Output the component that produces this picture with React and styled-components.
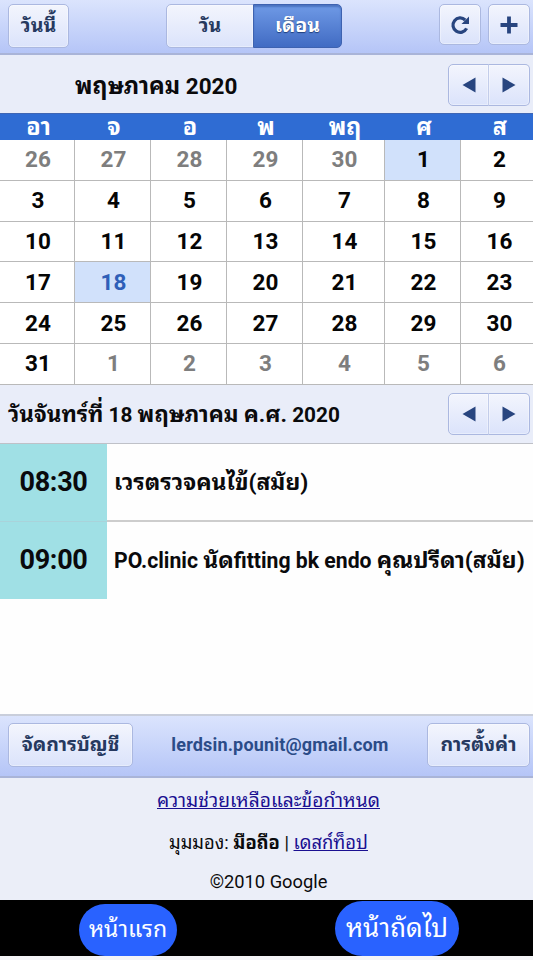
import React, { useState } from "react";
import styled, { createGlobalStyle } from "styled-components";

const GlobalStyle = createGlobalStyle`
  * {
    box-sizing: border-box;
  }
  body {
    margin: 0;
    background: #f4f5f7;
    font-family: Roboto, "Noto Sans Thai Looped", "Noto Sans", sans-serif;
    line-height: 1.2;
    color: #0a0a0c;
  }
  button {
    font-family: inherit;
    line-height: inherit;
    padding: 0;
    cursor: pointer;
  }
`;

const Page = styled.div`
  width: 533px;
  height: 960px;
  overflow: hidden;
  display: flex;
  flex-direction: column;
`;

// Thai glyphs run smaller than Roboto at the same size
const Thai = styled.span`
  font-size: ${(props) => props.$scale || 1.08}em;
  line-height: 1;
`;

const Toolbar = styled.div`
  display: flex;
  justify-content: space-between;
  align-items: flex-start;
  height: ${(props) => props.$height}px;
  padding: ${(props) => props.$pad};
  background: linear-gradient(#dbe4fd, #b5c5f7);
  border-top: ${(props) => (props.$topLine ? "2px solid #c9cedb" : "none")};
  border-bottom: 2px solid #a9b4d8;
`;

const Group = styled.div`
  display: flex;
  gap: ${(props) => props.$gap || 0}px;
`;

const Button = styled.button`
  display: flex;
  align-items: center;
  justify-content: center;
  width: ${(props) => props.$width}px;
  height: ${(props) => props.$height || 44}px;
  border: 1px solid #abb8e0;
  border-radius: ${(props) => props.$radius || "5px"};
  background: linear-gradient(#f3f5fd, #dbe3fb);
  box-shadow: inset 0 0 0 1px rgba(255, 255, 255, 0.35);
  color: #26395f;
  font-size: 19.5px;
  font-weight: 700;
  white-space: nowrap;
  ${(props) =>
    props.$joined &&
    `
      border-left-color: #c3cdea;
      margin-left: -1px;
    `}
  ${(props) =>
    props.$active &&
    `
      background: linear-gradient(#6f9ae6, #416bc3);
      border-color: #3e62b0;
      box-shadow: inset 0 2px 2px #4a72c0;
      color: #fff;
      text-shadow: 0 1px 1px #1f3f7d;
    `}
`;

const Account = styled.div`
  color: #2b4c88;
  font-size: 18px;
  font-weight: 700;
  line-height: 43px;
  letter-spacing: 0.17px;
`;

const Heading = styled.div`
  display: flex;
  align-items: center;
  justify-content: space-between;
  height: ${(props) => props.$height}px;
  padding: ${(props) => props.$pad};
  background: #e9edf9;
  border-bottom: ${(props) => (props.$line ? "1px solid #bfc1c8" : "none")};
`;

const Title = styled.div`
  padding-top: 2px;
  font-size: ${(props) => props.$size}px;
  font-weight: 700;
  white-space: nowrap;
`;

const Week = styled.div`
  display: grid;
  grid-template-columns: 75px 76px 76px 76px 82px 76px 76px;
`;

const WeekHead = styled(Week)`
  height: 27px;
  background: #2f6cd3;
  border-top: 1px solid #3f66b4;
`;

const WeekDay = styled.div`
  padding-left: 2px;
  color: #fff;
  font-size: 23.5px;
  font-weight: 700;
  line-height: 26px;
  text-align: center;
`;

const Month = styled(Week)`
  grid-auto-rows: 40.8px;
  height: 245px;
  background: #fff;
`;

const Day = styled.div`
  display: flex;
  align-items: center;
  justify-content: center;
  padding-left: 2px;
  border-right: 1px solid #b9b9b9;
  border-bottom: 1px solid #b9b9b9;
  background: ${(props) => (props.$marked ? "#d1e1fb" : "#fff")};
  color: ${(props) =>
    props.$today ? "#2f5fb8" : props.$muted ? "#7e7e7e" : "#050505"};
  font-size: 22.5px;
  font-weight: 700;
`;

const Events = styled.div`
  height: 270px;
  background: #fefefe;
`;

const Event = styled.div`
  display: flex;
  align-items: center;
  height: ${(props) => props.$height}px;
`;

const Time = styled.div`
  display: flex;
  align-items: center;
  justify-content: center;
  width: 107px;
  height: 100%;
  background: #a0e0e5;
  border-bottom: ${(props) => (props.$line ? "1px solid #a9d3da" : "none")};
  font-size: 27px;
  font-weight: 700;
  letter-spacing: -0.3px;
`;

const EventName = styled.div`
  flex: 1;
  height: 100%;
  padding-left: 7px;
  border-bottom: ${(props) => (props.$line ? "2px solid #cdcdcd" : "none")};
  font-size: 21.2px;
  font-weight: 700;
  line-height: 78px;
  white-space: nowrap;
`;

const Footer = styled.div`
  display: flex;
  flex-direction: column;
  align-items: center;
  height: 122px;
  padding-top: 7px;
  background: #ebeef8;
  font-size: 18px;
`;

const FooterLine = styled.div`
  height: ${(props) => props.$height}px;
  line-height: 32px;
  padding-left: 4px;
  font-size: ${(props) => props.$size || 18}px;
  white-space: nowrap;
`;

const Link = styled.a`
  color: #1a0f91;
  text-decoration: underline;
  text-decoration-skip-ink: none;
`;

const BottomNav = styled.div`
  display: flex;
  align-items: flex-end;
  height: 56px;
  padding-left: 79px;
  gap: 158px;
  background: #000;
`;

const Pill = styled.button`
  display: flex;
  align-items: center;
  justify-content: center;
  width: ${(props) => props.$width}px;
  height: ${(props) => props.$height}px;
  border: 0;
  border-radius: 28px;
  background: #2962ff;
  color: #fff;
  font-size: ${(props) => props.$size}px;
  white-space: nowrap;
`;

const Arrow = ({ left }) => (
  <svg width="14" height="16" viewBox="0 0 14 16">
    <path d={left ? "M13.5 0.5V15.5L0.5 8Z" : "M0.5 0.5V15.5L13.5 8Z"} fill="#28457f" />
  </svg>
);

const Pager = ({ onPrev, onNext }) => (
  <Group>
    <Button $width={41} $height={42} $radius="5px 0 0 5px" onClick={onPrev}>
      <Arrow left />
    </Button>
    <Button $width={42} $height={42} $radius="0 5px 5px 0" $joined onClick={onNext}>
      <Arrow />
    </Button>
  </Group>
);

const weekDays = ["อา", "จ", "อ", "พ", "พฤ", "ศ", "ส"];

// five trailing days of April, May, then six days of June
const days = Array.from({ length: 42 }, (_, i) => {
  if (i < 5) return { n: 26 + i, muted: true };
  if (i > 35) return { n: i - 35, muted: true };
  return { n: i - 4, muted: false };
});

const App = () => {
  const [view, setView] = useState("month");
  return (
    <Page>
      <GlobalStyle />
      <Toolbar $height={55} $pad="4px 3px 0 8px">
        <Button $width={61}>วันนี้</Button>
        <Group>
          <Button
            $width={88}
            $radius="5px 0 0 5px"
            $active={view === "day"}
            onClick={() => setView("day")}
          >
            วัน
          </Button>
          <Button
            $width={89}
            $radius="0 5px 5px 0"
            $joined
            $active={view === "month"}
            onClick={() => setView("month")}
          >
            เดือน
          </Button>
        </Group>
        <Group $gap={7}>
          <Button $width={42} $height={41}>
            <svg width="20" height="20" viewBox="0 0 20 20">
              <path
                d="M15.2 5A7.2 7.2 0 1 0 16.6 13.4"
                fill="none"
                stroke="#28457f"
                strokeWidth="3.2"
              />
              <path d="M19 1.5V9H11.5Z" fill="#28457f" />
            </svg>
          </Button>
          <Button $width={42} $height={41}>
            <svg width="18" height="18" viewBox="0 0 18 18">
              <path d="M9 0.5V17.5M0.5 9H17.5" stroke="#28457f" strokeWidth="3.8" />
            </svg>
          </Button>
        </Group>
      </Toolbar>
      <Heading $height={58} $pad="2px 3px 0 75px">
        <Title $size={22.5}>
          <Thai $scale={1.04}>พฤษภาคม</Thai> 2020
        </Title>
        <Pager />
      </Heading>
      <WeekHead>
        {weekDays.map((name, i) => (
          <WeekDay key={i}>{name}</WeekDay>
        ))}
      </WeekHead>
      <Month>
        {days.map((day, i) => (
          <Day
            key={i}
            $muted={day.muted}
            $marked={!day.muted && (day.n === 1 || day.n === 18)}
            $today={day.n === 18}
          >
            {day.n}
          </Day>
        ))}
      </Month>
      <Heading $height={59} $pad="0 3px 0 8px" $line>
        <Title $size={20.8}>
          <Thai>วันจันทร์ที่</Thai> 18 <Thai>พฤษภาคม</Thai> <Thai>ค.ศ.</Thai> 2020
        </Title>
        <Pager />
      </Heading>
      <Events>
        <Event $height={78}>
          <Time $line>08:30</Time>
          <EventName $line>
            <Thai>เวรตรวจคนไข้(สมัย)</Thai>
          </EventName>
        </Event>
        <Event $height={77}>
          <Time>09:00</Time>
          <EventName>
            PO.clinic <Thai>นัด</Thai>fitting bk endo <Thai>คุณปรีดา(สมัย)</Thai>
          </EventName>
        </Event>
      </Events>
      <Toolbar $height={64} $pad="7px 3px 0 8px" $topLine>
        <Button $width={125}>จัดการบัญชี</Button>
        <Account>lerdsin.pounit@gmail.com</Account>
        <Button $width={103}>การตั้งค่า</Button>
      </Toolbar>
      <Footer>
        <FooterLine $height={42} $size={19.2}>
          <Link>ความช่วยเหลือและข้อกำหนด</Link>
        </FooterLine>
        <FooterLine $height={39} $size={18.4}>
          มุมมอง: <b>มือถือ</b> | <Link>เดสก์ท็อป</Link>
        </FooterLine>
        <FooterLine $height={32} $size={18.3}>©2010 Google</FooterLine>
      </Footer>
      <BottomNav>
        <Pill $width={98} $height={52} $size={23}>
          หน้าแรก
        </Pill>
        <Pill $width={124} $height={55} $size={26}>
          หน้าถัดไป
        </Pill>
      </BottomNav>
    </Page>
  );
};

export default App;
